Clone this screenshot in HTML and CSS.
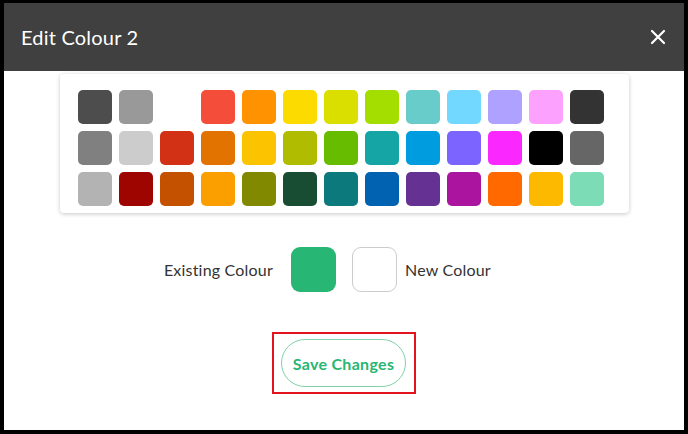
FILE: index.html
```html
<!DOCTYPE html>
<html lang="en">
<head>
    <meta charset="UTF-8">
    <title>Edit Colour 2</title>
    <link rel="stylesheet" href="styles.css">
</head>
<body>
    <div class="modal">
        <div class="modal-header">
            <h1>Edit Colour 2</h1>
            <button class="close-btn" aria-label="Close">
                <svg width="16" height="16" viewBox="0 0 16 16">
                    <path d="M2 2 L14 14 M14 2 L2 14" stroke="#fff" stroke-width="2.2" stroke-linecap="round"/>
                </svg>
            </button>
        </div>

        <div class="modal-body">
            <div class="palette">
                <span class="swatch" style="background:#4d4d4d"></span>
                <span class="swatch" style="background:#999999"></span>
                <span class="swatch" style="background:#ffffff"></span>
                <span class="swatch" style="background:#f44e3b"></span>
                <span class="swatch" style="background:#fe9200"></span>
                <span class="swatch" style="background:#fcdc00"></span>
                <span class="swatch" style="background:#dbdf00"></span>
                <span class="swatch" style="background:#a4dd00"></span>
                <span class="swatch" style="background:#68ccca"></span>
                <span class="swatch" style="background:#73d8ff"></span>
                <span class="swatch" style="background:#aea1ff"></span>
                <span class="swatch" style="background:#fda1ff"></span>
                <span class="swatch" style="background:#333333"></span>

                <span class="swatch" style="background:#808080"></span>
                <span class="swatch" style="background:#cccccc"></span>
                <span class="swatch" style="background:#d33115"></span>
                <span class="swatch" style="background:#e27300"></span>
                <span class="swatch" style="background:#fcc400"></span>
                <span class="swatch" style="background:#b0bc00"></span>
                <span class="swatch" style="background:#68bc00"></span>
                <span class="swatch" style="background:#16a5a5"></span>
                <span class="swatch" style="background:#009ce0"></span>
                <span class="swatch" style="background:#7b64ff"></span>
                <span class="swatch" style="background:#fa28ff"></span>
                <span class="swatch" style="background:#000000"></span>
                <span class="swatch" style="background:#666666"></span>

                <span class="swatch" style="background:#b3b3b3"></span>
                <span class="swatch" style="background:#9f0500"></span>
                <span class="swatch" style="background:#c45100"></span>
                <span class="swatch" style="background:#fb9e00"></span>
                <span class="swatch" style="background:#808900"></span>
                <span class="swatch" style="background:#194d33"></span>
                <span class="swatch" style="background:#0c797d"></span>
                <span class="swatch" style="background:#0062b1"></span>
                <span class="swatch" style="background:#653294"></span>
                <span class="swatch" style="background:#ab149e"></span>
                <span class="swatch" style="background:#ff6900"></span>
                <span class="swatch" style="background:#fcb900"></span>
                <span class="swatch" style="background:#7bdcb5"></span>
            </div>

            <div class="compare">
                <span class="compare-label existing">Existing Colour</span>
                <span class="preview preview-old"></span>
                <span class="preview preview-new"></span>
                <span class="compare-label new">New Colour</span>
            </div>

            <!-- caixa vermelha de destaque em volta do botão -->
            <div class="highlight">
                <button class="save-btn">Save Changes</button>
            </div>
        </div>
    </div>
</body>
</html>
```

FILE: styles.css
```css
body {
    margin: 0;
    padding: 0;
    background-color: #000000;
    font-family: 'Lato', 'Noto Sans', sans-serif;
}

.modal {
    width: 680px;
    height: 427px;
    margin: 3px 4px 4px 4px;
    background-color: #ffffff;
    display: flex;
    flex-direction: column;
}

.modal-header {
    height: 68px;
    background-color: #404040;
    display: flex;
    align-items: center;
    justify-content: space-between;
    padding: 0 18px 0 17px;
    flex-shrink: 0;
}

.modal-header h1 {
    margin: 0;
    color: #ffffff;
    font-size: 20px;
    font-weight: 400;
    letter-spacing: 0.2px;
}

.close-btn {
    background: none;
    border: none;
    padding: 0;
    width: 16px;
    height: 16px;
    cursor: pointer;
    display: flex;
}

.modal-body {
    display: flex;
    flex-direction: column;
    align-items: center;
}

.palette {
    margin-top: 3px;
    width: 569px;
    box-sizing: border-box;
    padding: 16px 25px 7px 18px;
    display: grid;
    grid-template-columns: repeat(13, 34px);
    gap: 7px;
    background-color: #ffffff;
    border-radius: 4px;
    box-shadow: 0 1px 4px rgba(0, 0, 0, 0.22);
}

.swatch {
    width: 34px;
    height: 34px;
    border-radius: 5px;
}

.compare {
    margin-top: 34px;
    width: 100%;
    display: grid;
    grid-template-columns: 1fr auto auto 1fr;
    align-items: center;
    column-gap: 16px;
}

.compare-label {
    font-size: 16px;
    color: #333333;
    letter-spacing: 0.2px;
}

.existing {
    justify-self: end;
    margin-right: 2px;
}

.new {
    margin-left: -8px;
}

.preview {
    width: 45px;
    height: 45px;
    border-radius: 9px;
    box-sizing: border-box;
}

.preview-old {
    background-color: #27b673;
}

.preview-new {
    background-color: #ffffff;
    border: 1px solid #cccccc;
}

.highlight {
    margin-top: 40px;
    border: 2px solid #e3141f;
    padding: 5px 8px 5px 7px;
    display: flex;
}

.save-btn {
    width: 125px;
    height: 48px;
    border-radius: 24px;
    border: 1px solid #7fd3a8;
    background-color: #ffffff;
    color: #27b673;
    font-family: 'Lato', 'Noto Sans', sans-serif;
    font-size: 16px;
    font-weight: 700;
    letter-spacing: 0.3px;
    cursor: pointer;
}
```
